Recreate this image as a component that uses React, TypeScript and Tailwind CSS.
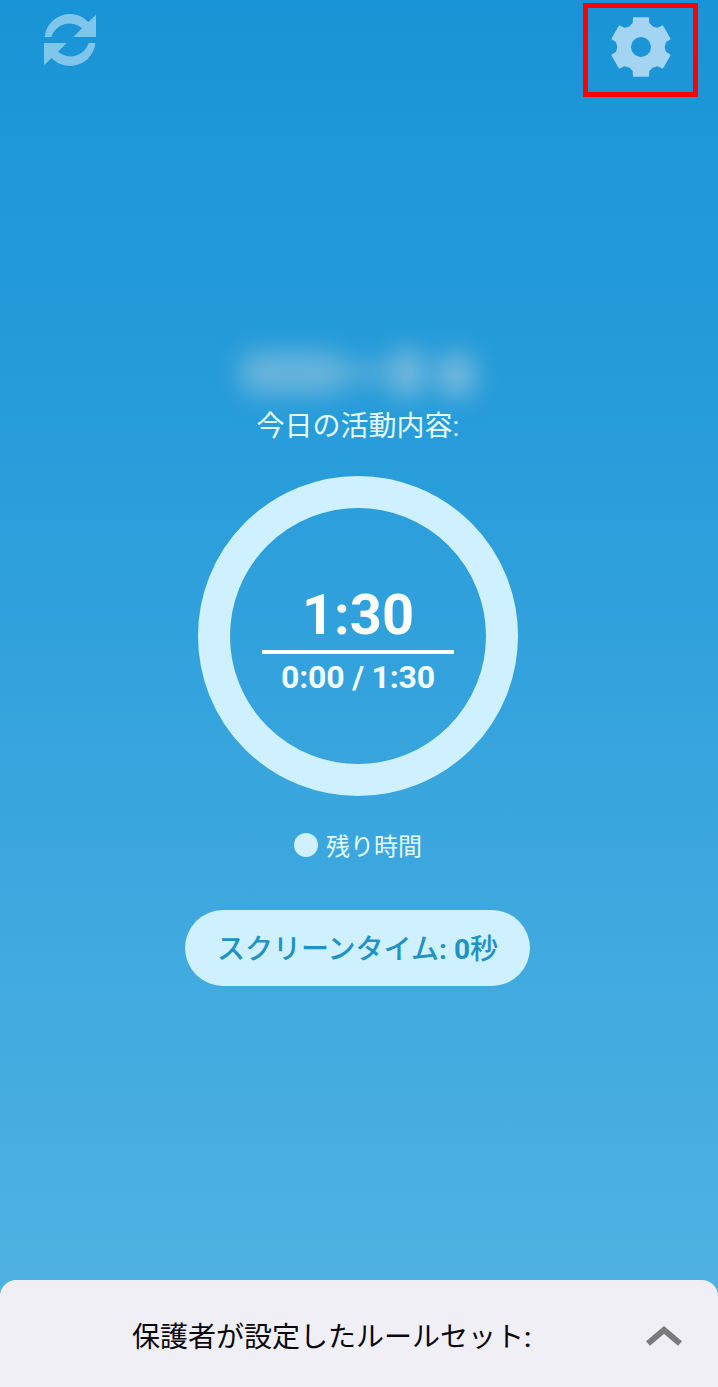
import React from "react";

const TEETH = [0, 60, 120, 180, 240, 300];

function RefreshIcon() {
  return (
    <svg className="h-[52px] w-[52px]" viewBox="0 0 156 156" fill="#80c6ea">
      <path d="M2 69A76 76 0 0 1 133 24L156 2V69H88L114 43A57 57 0 0 0 22 69Z" />
      <path d="M2 69A76 76 0 0 1 133 24L156 2V69H88L114 43A57 57 0 0 0 22 69Z" transform="rotate(180 78 78)" />
    </svg>
  );
}

function GearIcon() {
  return (
    <svg className="h-[60px] w-[60px]" viewBox="-90 -90 180 180" fill="#a3d4f1">
      <circle r="49" fill="none" stroke="#a3d4f1" strokeWidth="38" />
      {TEETH.map((angle) => (
        <path
          key={angle}
          transform={`rotate(${angle})`}
          d="M-22 -89.5H22Q24 -89.5 24 -87L25 -72Q30 -67 36 -61L20 -45H-20L-36 -61Q-30 -67 -25 -72L-24 -87Q-24 -89.5 -22 -89.5Z"
        />
      ))}
    </svg>
  );
}

function HiddenName() {
  return (
    <div className="flex h-[48px] w-[240px] items-center blur-[12px]" aria-hidden="true">
      <div className="h-[44px] w-[104px] rounded-2xl bg-[#a5cbdd]/50" />
      <div className="h-[24px] w-[42px] bg-[#a5cbdd]/35" />
      <div className="ml-1 h-[50px] w-[34px] rounded-2xl bg-[#a5cbdd]/60" />
      <div className="mt-1 ml-3 h-[44px] w-[40px] rounded-2xl bg-[#a5cbdd]/60" />
    </div>
  );
}

export default function App() {
  return (
    <div className="flex h-[1387px] w-[718px] flex-col overflow-hidden bg-linear-to-b from-[#1994d6] via-[#2a9edb] via-36% to-[#52b4e3] font-['Roboto','Noto_Sans_CJK_JP',sans-serif] text-white">
      <header className="flex h-[100px] items-start justify-between pr-5 pl-11">
        <button className="mt-[14px]" aria-label="更新">
          <RefreshIcon />
        </button>
        <button className="mt-[3px] flex h-[94px] w-[115px] items-start justify-center border-5 border-[#ff0000] pt-[9px]" aria-label="設定">
          <GearIcon />
        </button>
      </header>

      <main className="flex w-[716px] flex-1 flex-col items-center">
        <div className="mt-[249px] ml-1">
          <HiddenName />
        </div>
        <h1 className="mt-[10px] h-10 text-[28px] leading-10 whitespace-nowrap text-[#e4fbff]">今日の活動内容:</h1>

        <section className="mt-[29px] flex h-80 w-80 shrink-0 flex-col items-center rounded-full border-32 border-[#cff0fe] pt-[74px] font-bold">
          <div className="h-[68px] text-[56px] leading-[66px]">1:30</div>
          <div className="h-1 w-48 bg-white" />
          <div className="mt-[3px] text-[32px] leading-10 tracking-[-0.2px] text-[#f2fdff]">0:00 / 1:30</div>
        </section>

        <div className="mt-[33px] flex h-8 items-center gap-2 text-2xl text-[#e4fbff]">
          <span className="h-6 w-6 rounded-full bg-[#cff0fe]" />
          <span className="pt-1">残り時間</span>
        </div>

        <button className="mt-[49px] mr-px flex h-[76px] w-[345px] shrink-0 items-center justify-center rounded-full bg-[#cff0fe] pt-[3px] text-[28px] font-medium whitespace-nowrap text-[#2092c6]">
          <span>
            スクリーンタイム<span className="font-bold">: 0</span>秒
          </span>
        </button>
      </main>

      <footer className="flex h-[107px] items-center rounded-t-2xl bg-[#f0eff5] pr-9 pl-[132px] text-[28px] text-[#08080c]">
        <span className="pt-2 leading-10 whitespace-nowrap">
          保護者が設定したルールセット<span className="font-medium">:</span>
        </span>
        <svg className="mt-1 ml-auto h-[22px] w-9" viewBox="0 0 36 22" fill="none" stroke="#7b7b7d" strokeWidth="6">
          <path d="M2 18.5L18 5L34 18.5" />
        </svg>
      </footer>
    </div>
  );
}
